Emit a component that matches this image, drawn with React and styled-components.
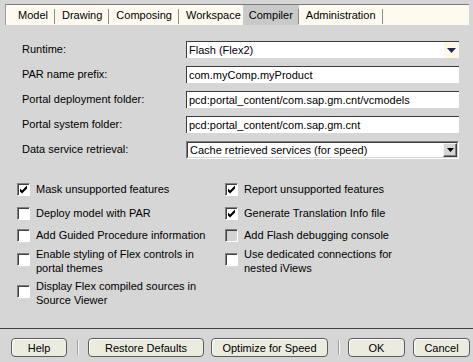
import styled, { createGlobalStyle } from 'styled-components';

const GlobalStyle = createGlobalStyle`
  html, body {
    margin: 0;
    padding: 0;
    background: #d6d6d6;
  }
  body {
    font-family: "Liberation Sans", Arial, sans-serif;
    font-size: 11px;
    color: #000;
  }
`;

const Window = styled.div`
  width: 473px;
  height: 362px;
  display: flex;
  flex-direction: column;
  background: #d6d6d6;
  overflow: hidden;
`;

const TabBar = styled.div`
  display: flex;
  align-items: stretch;
  height: 20px;
  margin: 4px 4px 0 5px;
  padding-left: 5px;
  background: #fffaf0;
  border-top: 1px solid #7c7c7c;
  border-left: 1px solid #9a9a9a;
`;

const Tab = styled.div`
  position: relative;
  display: flex;
  align-items: center;
  padding: 0 ${(p) => (p.$active ? 6 : 7)}px;
  margin-left: ${(p) => (p.$active ? -5 : 0)}px;
  background: ${(p) => (p.$active ? '#c9c9c9' : 'transparent')};

  &::after {
    content: '';
    position: absolute;
    right: 0;
    top: 4px;
    bottom: 1px;
    width: 1px;
    background: ${(p) => (p.$hideSep ? 'transparent' : '#8c8c8c')};
  }
`;

const Form = styled.div`
  display: grid;
  grid-template-columns: 164px 273px;
  grid-auto-rows: 17px;
  row-gap: 8px;
  align-items: center;
  padding: 16px 0 0 22px;
`;

const Label = styled.div`
  line-height: 17px;
`;

const Field = styled.div`
  height: 17px;
  box-sizing: border-box;
  display: flex;
  align-items: center;
  background: #fff;
  border-top: 1px solid #3c3c3c;
  border-left: 1px solid #3c3c3c;
  padding-left: 2px;
  white-space: nowrap;
`;

const FieldText = styled.span`
  flex: 1;
`;

const FlatArrow = styled.div`
  width: 15px;
  height: 16px;
  background: #fff8e6;
  display: flex;
  align-items: center;
  justify-content: center;
`;

const Sunken = styled.div`
  height: 18px;
  box-sizing: border-box;
  display: flex;
  align-items: stretch;
  border-top: 1px solid #808080;
  border-left: 1px solid #808080;
  border-right: 1px solid #fff;
  border-bottom: 1px solid #fff;
`;

const SunkenInner = styled.div`
  flex: 1;
  display: flex;
  align-items: stretch;
  background: #fff;
  border-top: 1px solid #3c3c3c;
  border-left: 1px solid #3c3c3c;
  border-right: 1px solid #d6d6d6;
  border-bottom: 1px solid #d6d6d6;
`;

const SunkenText = styled.span`
  flex: 1;
  padding-left: 2px;
  line-height: 14px;
`;

const BevelButton = styled.div`
  width: 14px;
  box-sizing: border-box;
  background: #d6d6d6;
  border-top: 1px solid #f4f4f4;
  border-left: 1px solid #f4f4f4;
  border-right: 1px solid #404040;
  border-bottom: 1px solid #404040;
  box-shadow: inset -1px -1px 0 #808080;
  display: flex;
  align-items: center;
  justify-content: center;
`;

const Checks = styled.div`
  display: grid;
  grid-template-columns: 208px 240px;
  grid-template-rows: 24px 22px 19px 32px 28px;
  padding: 24px 0 0 17px;
`;

const CheckItem = styled.div`
  display: flex;
  align-items: center;
  align-self: start;
  height: ${(p) => (p.$tall ? 28 : 14)}px;
  gap: 6px;
`;

const Box = styled.div`
  flex: none;
  width: 13px;
  height: 13px;
  box-sizing: border-box;
  margin-top: ${(p) => (p.$tall ? -3 : 0)}px;
  background: ${(p) => (p.$disabled ? '#d4d4d4' : '#fff')};
  border-top: 1px solid #808080;
  border-left: 1px solid #808080;
  border-right: 1px solid #fff;
  border-bottom: 1px solid #fff;
  box-shadow: inset 1px 1px 0 #404040;
  display: flex;
  align-items: center;
  justify-content: center;
`;

const CheckText = styled.div`
  line-height: 14px;
`;

const Spacer = styled.div`
  flex: 1;
`;

const Footer = styled.div`
  border-top: 1px solid #404040;
  display: flex;
  align-items: center;
  padding: 9px 0 5px 11px;
`;

const Button = styled.div`
  width: ${(p) => p.$w}px;
  height: 19px;
  box-sizing: border-box;
  margin-right: ${(p) => p.$mr || 0}px;
  display: flex;
  align-items: center;
  justify-content: center;
  background: #ebebe0;
  border: 1px solid #5c5c5c;
  border-radius: 4px;
  box-shadow: inset 1px 1px 0 #fff;
`;

const ButtonSep = styled.div`
  width: 1px;
  height: 15px;
  background: #a0a0a0;
  border-right: 1px solid #f6f6f6;
  margin-right: ${(p) => p.$mr}px;
`;

const Check = () => (
  <svg width="9" height="9" viewBox="0 0 9 9">
    <path d="M1 3.5 L3 5.5 L8 0.5 V3.5 L3 8.5 L1 6.5 Z" fill="#000" />
  </svg>
);

const NavyArrow = () => (
  <svg width="9" height="5" viewBox="0 0 9 5">
    <path d="M0 0 H9 L4.5 5 Z" fill="#25255e" />
  </svg>
);

const SmallArrow = () => (
  <svg width="7" height="4" viewBox="0 0 7 4">
    <path d="M0 0 H7 L3.5 4 Z" fill="#000" />
  </svg>
);

const tabs = ['Model', 'Drawing', 'Composing', 'Workspace', 'Compiler', 'Administration'];

const checks = [
  ['Mask unsupported features', true, false],
  ['Report unsupported features', true, false],
  ['Deploy model with PAR', false, false],
  ['Generate Translation Info file', true, false],
  ['Add Guided Procedure information', false, false],
  ['Add Flash debugging console', false, true],
  [['Enable styling of Flex controls in', 'portal themes'], false, false],
  [['Use dedicated connections for', 'nested iViews'], false, false],
  [['Display Flex compiled sources in', 'Source Viewer'], false, false],
];

const App = () => {
  return (
    <Window>
      <GlobalStyle />
      <TabBar>
        {tabs.map((t, i) => (
          <Tab key={t} $active={t === 'Compiler'} $hideSep={tabs[i + 1] === 'Compiler'}>
            {t}
          </Tab>
        ))}
      </TabBar>

      <Form>
        <Label>Runtime:</Label>
        <Field>
          <FieldText>Flash (Flex2)</FieldText>
          <FlatArrow>
            <NavyArrow />
          </FlatArrow>
        </Field>
        <Label>PAR name prefix:</Label>
        <Field>com.myComp.myProduct</Field>
        <Label>Portal deployment folder:</Label>
        <Field>pcd:portal_content/com.sap.gm.cnt/vcmodels</Field>
        <Label>Portal system folder:</Label>
        <Field>pcd:portal_content/com.sap.gm.cnt</Field>
        <Label>Data service retrieval:</Label>
        <Sunken>
          <SunkenInner>
            <SunkenText>Cache retrieved services (for speed)</SunkenText>
            <BevelButton>
              <SmallArrow />
            </BevelButton>
          </SunkenInner>
        </Sunken>
      </Form>

      <Checks>
        {checks.map(([text, checked, disabled], i) => {
          const tall = Array.isArray(text);
          return (
            <CheckItem key={i} $tall={tall}>
              <Box $disabled={disabled} $tall={tall}>
                {checked && <Check />}
              </Box>
              <CheckText>
                {tall ? (
                  <>
                    {text[0]}
                    <br />
                    {text[1]}
                  </>
                ) : (
                  text
                )}
              </CheckText>
            </CheckItem>
          );
        })}
      </Checks>

      <Spacer />

      <Footer>
        <Button $w={56} $mr={10}>Help</Button>
        <ButtonSep $mr={9} />
        <Button $w={116} $mr={7}>Restore Defaults</Button>
        <Button $w={117} $mr={10}>Optimize for Speed</Button>
        <ButtonSep $mr={8} />
        <Button $w={57} $mr={8}>OK</Button>
        <Button $w={57}>Cancel</Button>
      </Footer>
    </Window>
  );
};

export default App;
